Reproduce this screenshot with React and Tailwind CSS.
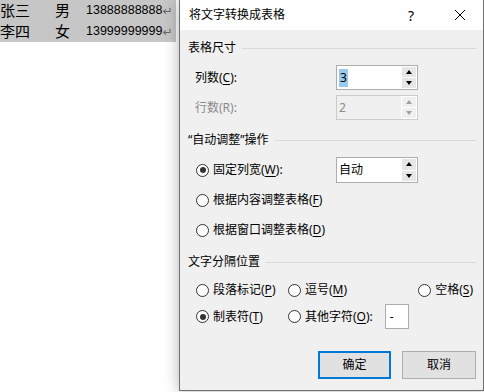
import React from 'react'

const font = { fontFamily: '"Noto Sans", "Noto Sans CJK SC", sans-serif' }

const Key = ({ children }) => <span className="underline underline-offset-2">{children}</span>

const Radio = ({ checked }) => (
  <span className="w-[13px] h-[13px] rounded-full border border-[#333] bg-white flex items-center justify-center shrink-0">
    {checked && <span className="w-[6px] h-[6px] rounded-full bg-[#333]" />}
  </span>
)

const RadioLabel = ({ checked, children, className = '' }) => (
  <label className={`flex items-center gap-[4px] ${className}`}>
    <Radio checked={checked} />
    <span>{children}</span>
  </label>
)

const Heading = ({ children }) => (
  <div className="flex items-center h-[20px] pl-[8px] pr-[7px] gap-[6px]">
    <span>{children}</span>
    <span className="flex-1 h-px bg-[#d9d9d9]" />
  </div>
)

const Spin = ({ disabled }) => {
  const c = disabled ? 'border-b-[#a0a0a0]' : 'border-b-black'
  const c2 = disabled ? 'border-t-[#a0a0a0]' : 'border-t-black'
  return (
    <div className="w-[16px] flex flex-col gap-[1px] p-[1px] bg-white">
      <div className={`flex-1 flex items-center justify-center ${disabled ? 'bg-[#f0f0f0]' : 'bg-[#e6e6e6]'}`}>
        <span className={`w-0 h-0 border-x-[3px] border-x-transparent border-b-[4px] ${c}`} />
      </div>
      <div className={`flex-1 flex items-center justify-center ${disabled ? 'bg-[#f0f0f0]' : 'bg-[#e6e6e6]'}`}>
        <span className={`w-0 h-0 border-x-[3px] border-x-transparent border-t-[4px] ${c2}`} />
      </div>
    </div>
  )
}

const SpinBox = ({ value, disabled, selected, h = 'h-[25px]' }) => (
  <div className={`ml-auto mr-[65px] w-[82px] ${h} flex border ${disabled ? 'border-[#cccccc] bg-[#f0f0f0]' : 'border-[#adadad] bg-white'}`}>
    <div className={`flex-1 flex items-center pl-[2px] ${disabled ? 'text-[#8a8a8a]' : 'text-black'}`}>
      <span className={selected ? 'bg-[#99c9ef] px-px' : ''}>{value}</span>
    </div>
    <Spin disabled={disabled} />
  </div>
)

export default function App() {
  return (
    <div className="w-[484px] h-[392px] flex bg-white overflow-hidden text-[12px] text-black" style={font}>
      <div className="w-[179px] shrink-0">
        <div className="w-[176px] bg-[#c6c6c6]">
          {[['张三', '男', '13888888888'], ['李四', '女', '13999999999']].map(([n, s, p]) => (
            <div key={n} className="h-[21px] flex items-center">
              <span className="w-[55px] text-[15px] leading-none">{n}</span>
              <span className="w-[31px] text-[15px] leading-none">{s}</span>
              <span className="text-[12.5px] leading-none" style={{ fontFamily: '"Liberation Sans", sans-serif' }}>{p}</span>
              <span className="text-[12px] text-[#666] leading-none" style={{ fontFamily: '"DejaVu Sans", sans-serif' }}>↵</span>
            </div>
          ))}
        </div>
      </div>

      <div className="w-[305px] h-[391px] flex flex-col border-x border-b border-[#707070] bg-[#f0f0f0] shadow-[0_0_14px_rgba(0,0,0,0.3)]">
        <div className="h-[30px] bg-white flex items-center pl-[9px] shrink-0">
          <span className="text-[12px]">将文字转换成表格</span>
          <span className="ml-auto text-[14px] mr-[40px]">?</span>
          <svg width="12" height="12" viewBox="0 0 12 12" className="mr-[17px]">
            <path d="M1 1 L11 11 M11 1 L1 11" stroke="#000" strokeWidth="1" />
          </svg>
        </div>

        <div className="mt-[8px]"><Heading>表格尺寸</Heading></div>

        <div className="mt-[7px] flex items-center pl-[15px]">
          <span>列数(<Key>C</Key>):</span>
          <SpinBox value="3" selected />
        </div>
        <div className="mt-[5px] flex items-center pl-[15px]">
          <span className="text-[#8a8a8a]">行数(R):</span>
          <SpinBox value="2" disabled />
        </div>

        <div className="mt-[10px]"><Heading>“自动调整”操作</Heading></div>

        <div className="mt-[7px] flex items-center pl-[16px]">
          <RadioLabel checked>固定列宽(<Key>W</Key>):</RadioLabel>
          <SpinBox value="自动" h="h-[26px]" />
        </div>
        <div className="mt-[7px] h-[20px] flex items-center pl-[16px]">
          <RadioLabel>根据内容调整表格(<Key>F</Key>)</RadioLabel>
        </div>
        <div className="mt-[10px] h-[20px] flex items-center pl-[16px]">
          <RadioLabel>根据窗口调整表格(<Key>D</Key>)</RadioLabel>
        </div>

        <div className="mt-[12px]"><Heading>文字分隔位置</Heading></div>

        <div className="mt-[8px] h-[20px] flex items-center pl-[16px] pr-[10px]">
          <RadioLabel className="w-[92px]">段落标记(<Key>P</Key>)</RadioLabel>
          <RadioLabel>逗号(<Key>M</Key>)</RadioLabel>
          <RadioLabel className="ml-auto">空格(<Key>S</Key>)</RadioLabel>
        </div>
        <div className="mt-[4px] h-[25px] flex items-center pl-[16px]">
          <RadioLabel checked className="w-[92px]">制表符(<Key>T</Key>)</RadioLabel>
          <RadioLabel>其他字符(<Key>O</Key>):</RadioLabel>
          <div className="ml-[12px] w-[24px] h-[25px] bg-white border border-[#adadad] flex items-center pl-[4px]">-</div>
        </div>

        <div className="mt-[22px] flex justify-end gap-[11px] pr-[7px]">
          <button className="w-[73px] h-[28px] bg-[#e1e1e1] border-2 border-[#0078d7]">确定</button>
          <button className="w-[74px] h-[28px] bg-[#e1e1e1] border border-[#adadad]">取消</button>
        </div>
      </div>
    </div>
  )
}
